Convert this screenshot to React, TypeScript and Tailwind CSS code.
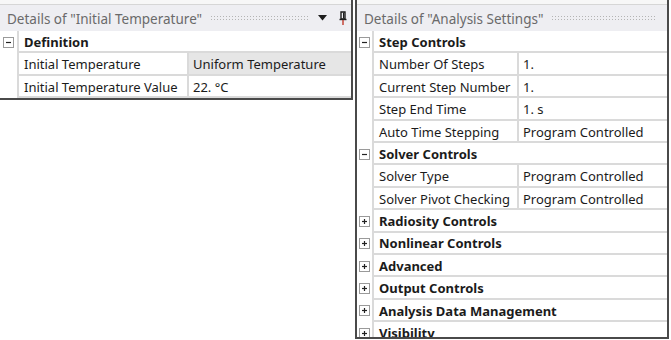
const ROW = "h-[22.4px] shrink-0";

function Dots() {
  return (
    <div className="mx-2 h-[6px] flex-1 bg-[radial-gradient(circle,#b4b4b4_0.8px,transparent_1px)] bg-[length:3px_3px]" />
  );
}

function Toggle({ open }: { open: boolean }) {
  return (
    <div className="flex h-[11px] w-[11px] items-center justify-center border border-[#9a9a9a] bg-white">
      <svg width="7" height="7" viewBox="0 0 7 7">
        <path d="M1 3.5H6" stroke="#222" strokeWidth="1.2" />
        {!open && <path d="M3.5 1V6" stroke="#222" strokeWidth="1.2" />}
      </svg>
    </div>
  );
}

function Header({ title, tools }: { title: string; tools?: boolean }) {
  return (
    <div className="flex h-[26px] shrink-0 items-center bg-[#eeeef2] pl-[7px] pr-[4px] text-[13.5px] text-[#6a6a6a]">
      <span className="whitespace-nowrap pt-[2px]">{title}</span>
      <Dots />
      {tools && (
        <div className="flex items-center gap-[12px]">
          <svg width="9" height="6" viewBox="0 0 9 6">
            <path d="M0 0H9L4.5 5.5Z" fill="#1e1e1e" />
          </svg>
          <svg width="8" height="14" viewBox="0 0 8 14">
            <path d="M2 1H6V8H2Z" fill="none" stroke="#1e1e1e" strokeWidth="1.4" />
            <path d="M0.5 8.5H7.5" stroke="#1e1e1e" strokeWidth="1.4" />
            <path d="M4 9V14" stroke="#c0392b" strokeWidth="1.4" />
            <path d="M4.6 1.5V7.5" stroke="#1e1e1e" strokeWidth="1.2" />
          </svg>
        </div>
      )}
    </div>
  );
}

function Group({ label, open, gutter }: { label: string; open: boolean; gutter: string }) {
  return (
    <div className={`flex ${ROW}`}>
      <div className={`flex ${gutter} shrink-0 items-center justify-center`}>
        <Toggle open={open} />
      </div>
      <div className="flex flex-1 items-center border-b-2 border-l-2 border-[#dadada] pl-[5px] pt-[3px] font-bold">
        {label}
      </div>
    </div>
  );
}

function Prop({
  label,
  value,
  gutter,
  labelW,
  grey,
}: {
  label: string;
  value: string;
  gutter: string;
  labelW: string;
  grey?: boolean;
}) {
  return (
    <div className={`flex ${ROW}`}>
      <div className={`${gutter} shrink-0`} />
      <div className={`flex ${labelW} shrink-0 items-center border-b-2 border-l-2 border-[#dadada] pl-[5px] pt-[3px] whitespace-nowrap`}>
        {label}
      </div>
      <div
        className={`flex flex-1 items-center border-b-2 border-l-2 border-[#dadada] pl-[4px] pt-[3px] whitespace-nowrap ${
          grey ? "bg-[#e6e6e6]" : ""
        }`}
      >
        {value}
      </div>
    </div>
  );
}

export default function App() {
  const leftGutter = "w-[17px]";
  const rightGutter = "w-[15px]";
  const rightLabel = "w-[145px]";

  return (
    <div className="flex h-[340px] w-[671px] items-start overflow-hidden bg-white font-['Noto_Sans',sans-serif] text-[13px] text-[#1b1b1b]">
      <div className="flex w-[353px] shrink-0 flex-col border-r-2 border-b-2 border-[#4a4a4a]">
        <div className="h-[5px] border-b border-[#d6d6d6] bg-[#f7f7f7]" />
        <Header title={'Details of "Initial Temperature"'} tools />
        <Group label="Definition" open gutter={leftGutter} />
        <Prop
          label="Initial Temperature"
          value="Uniform Temperature"
          gutter={leftGutter}
          labelW="w-[170px]"
          grey
        />
        <Prop
          label="Initial Temperature Value"
          value="22. °C"
          gutter={leftGutter}
          labelW="w-[170px]"
        />
      </div>

      <div className="ml-[2px] flex h-[339px] w-[314px] shrink-0 flex-col overflow-hidden border-x-2 border-b-2 border-[#4a4a4a]">
        <div className="h-[5px] shrink-0 border-b border-[#d6d6d6] bg-[#f7f7f7]" />
        <Header title={'Details of "Analysis Settings"'} />
        <Group label="Step Controls" open gutter={rightGutter} />
        <Prop label="Number Of Steps" value="1." gutter={rightGutter} labelW={rightLabel} />
        <Prop label="Current Step Number" value="1." gutter={rightGutter} labelW={rightLabel} />
        <Prop label="Step End Time" value="1. s" gutter={rightGutter} labelW={rightLabel} />
        <Prop label="Auto Time Stepping" value="Program Controlled" gutter={rightGutter} labelW={rightLabel} />
        <Group label="Solver Controls" open gutter={rightGutter} />
        <Prop label="Solver Type" value="Program Controlled" gutter={rightGutter} labelW={rightLabel} />
        <Prop label="Solver Pivot Checking" value="Program Controlled" gutter={rightGutter} labelW={rightLabel} />
        <Group label="Radiosity Controls" open={false} gutter={rightGutter} />
        <Group label="Nonlinear Controls" open={false} gutter={rightGutter} />
        <Group label="Advanced" open={false} gutter={rightGutter} />
        <Group label="Output Controls" open={false} gutter={rightGutter} />
        <Group label="Analysis Data Management" open={false} gutter={rightGutter} />
        <Group label="Visibility" open={false} gutter={rightGutter} />
      </div>
    </div>
  );
}
